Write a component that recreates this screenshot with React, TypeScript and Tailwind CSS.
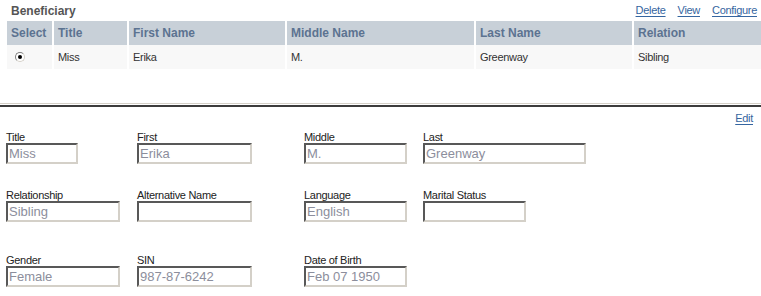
import React from "react";

const cols = ["Select", "Title", "First Name", "Middle Name", "Last Name", "Relation"];
const row = ["Miss", "Erika", "M.", "Greenway", "Sibling"];

const Field = ({ label, value, w }: { label: string; value: string; w: string }) => (
  <div className="flex flex-col">
    <div className="h-[12px] text-[11px] leading-[12px] tracking-[-0.3px] text-[#222]">{label}</div>
    <input
      readOnly
      value={value}
      className={`${w} h-[21px] border-2 border-t-[#585858] border-l-[#585858] border-r-[#d4d0c8] border-b-[#d4d0c8] bg-white px-[1px] text-[13px] leading-[17px] text-[#8c8e9c] outline-none`}
    />
  </div>
);

export default function App() {
  return (
    <div className="w-[761px] h-[296px] overflow-hidden bg-white font-['Liberation_Sans',Arial,sans-serif]">
      <div className="pl-[7px]">
        <div className="flex h-[21px] items-center justify-between pl-1 pr-[4px]">
          <span className="text-[12px] font-bold text-[#555]">Beneficiary</span>
          <div className="flex gap-[12px] text-[11px] tracking-[-0.3px] text-[#3565a0]">
            <a className="underline underline-offset-2 cursor-pointer">Delete</a>
            <a className="underline underline-offset-2 cursor-pointer">View</a>
            <a className="underline underline-offset-2 cursor-pointer">Configure</a>
          </div>
        </div>
        <div className="grid grid-cols-[45px_73px_156px_187px_156px_1fr] gap-x-[2px]">
          {cols.map((c) => (
            <div key={c} className="flex h-[24px] items-center bg-[#c8d0d8] px-1 text-[12px] font-bold text-[#5c7391]">
              {c}
            </div>
          ))}
          <div className="flex h-[24px] items-center bg-[#f8f8f8] pl-[8px]">
            <span className="flex h-[10px] w-[10px] items-center justify-center rounded-full border border-t-[#808080] border-l-[#808080] border-r-[#d4d0c8] border-b-[#d4d0c8] bg-white">
              <span className="h-[4px] w-[4px] rounded-full bg-black" />
            </span>
          </div>
          {row.map((v, i) => (
            <div key={i} className="flex h-[24px] items-center bg-[#f8f8f8] px-1 text-[11px] tracking-[-0.3px] text-[#333]">
              {v}
            </div>
          ))}
        </div>
      </div>

      <div className="mt-[34px] border-t border-[#d4d0c8]" />
      <div className="mt-[1px] h-[2px] bg-[#3c3c3c]" />

      <div className="mt-[5px] flex justify-end pr-[8px]">
        <a className="text-[11px] leading-[13px] tracking-[-0.3px] text-[#3565a0] underline underline-offset-2 cursor-pointer">Edit</a>
      </div>

      <div className="mt-[6px] grid grid-cols-[131px_167px_119px_auto] pl-[6px]">
        <Field label="Title" value="Miss" w="w-[72px]" />
        <Field label="First" value="Erika" w="w-[115px]" />
        <Field label="Middle" value="M." w="w-[103px]" />
        <Field label="Last" value="Greenway" w="w-[163px]" />
      </div>
      <div className="mt-[25px] grid grid-cols-[131px_167px_119px_auto] pl-[6px]">
        <Field label="Relationship" value="Sibling" w="w-[114px]" />
        <Field label="Alternative Name" value="" w="w-[115px]" />
        <Field label="Language" value="English" w="w-[103px]" />
        <Field label="Marital Status" value="" w="w-[103px]" />
      </div>
      <div className="mt-[32px] grid grid-cols-[131px_167px_119px_auto] pl-[6px]">
        <Field label="Gender" value="Female" w="w-[114px]" />
        <Field label="SIN" value="987-87-6242" w="w-[115px]" />
        <Field label="Date of Birth" value="Feb 07 1950" w="w-[103px]" />
      </div>
    </div>
  );
}
